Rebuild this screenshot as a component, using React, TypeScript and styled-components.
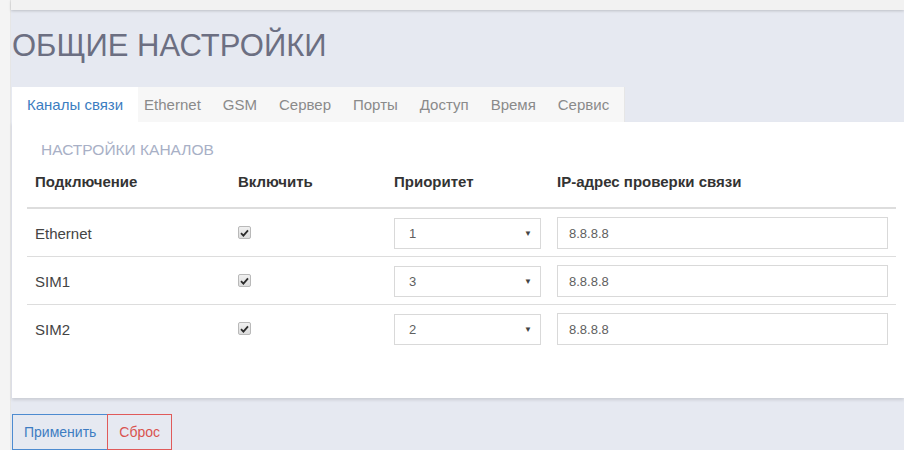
import React from 'react';
import styled, { createGlobalStyle } from 'styled-components';

const GlobalStyle = createGlobalStyle`
    html, body {
        margin: 0;
        padding: 0;
        background: #f4f4f4;
        font-family: "Liberation Sans", Arial, sans-serif;
        overflow: hidden;
    }
`;

const Page = styled.div`
    display: flex;
    width: 904px;
    height: 450px;
    overflow: hidden;
`;

const Gutter = styled.div`
    width: 10px;
    flex-shrink: 0;
    background: #f4f4f4;
    border-right: 1px solid #e6e6e6;
`;

const Main = styled.div`
    flex: 1;
    display: flex;
    flex-direction: column;
    min-width: 0;
`;

const TopBar = styled.div`
    height: 10px;
    flex-shrink: 0;
    background: #f2f2f2;
    box-shadow: 0 1px 3px rgba(0, 0, 0, 0.18);
    position: relative;
    z-index: 2;
`;

const Panel = styled.div`
    flex: 1;
    background: #e6e9f1;
    padding-left: 1px;
`;

const Title = styled.h1`
    margin: 19px 0 24px;
    font-size: 31px;
    line-height: 34px;
    font-weight: 400;
    color: #6c6f82;
`;

const Tabs = styled.div`
    display: flex;
    height: 35px;
`;

const Tab = styled.div<{ $active?: boolean }>`
    position: relative;
    z-index: ${(p) => (p.$active ? 1 : 0)};
    display: flex;
    align-items: center;
    padding: 0 15px;
    margin-left: -9px;
    font-size: 15px;
    color: ${(p) => (p.$active ? '#3b7dc1' : '#8a8a8a')};
    background: ${(p) => (p.$active ? '#ffffff' : '#f7f7f7')};
    border-right: ${(p) => (p.$active ? 'none' : '1px solid #e6e6e6')};
    &:first-child {
        margin-left: 0;
    }
`;

const Card = styled.div`
    background: #ffffff;
    padding: 17px 8px 46px 15px;
    box-shadow: 0 2px 3px rgba(0, 0, 0, 0.12);
`;

const SectionTitle = styled.div`
    font-size: 15.5px;
    line-height: 21px;
    color: #a8b0c6;
    padding-left: 14px;
    margin-bottom: 3px;
`;

const Table = styled.table`
    width: 869px;
    table-layout: fixed;
    border-collapse: collapse;
    font-size: 15px;
    color: #333;
`;

const Th = styled.th<{ $w: number }>`
    box-sizing: border-box;
    width: ${(p) => p.$w}px;
    text-align: left;
    font-weight: 700;
    padding: 8px 8px 15px;
    line-height: 21px;
    border-bottom: 2px solid #dddddd;
`;

const Row = styled.tr`
    & + & td {
        border-top: 1px solid #dddddd;
    }
`;

const Td = styled.td`
    padding: 8px 8px 7px;
    line-height: 21px;
    vertical-align: middle;
    color: #444;
`;

const Check = styled.span`
    display: inline-flex;
    align-items: center;
    justify-content: center;
    width: 11px;
    height: 11px;
    border: 1px solid #b9b9b9;
    border-radius: 2px;
    background: linear-gradient(#f0f0f0, #dcdcdc);
    vertical-align: middle;
    position: relative;
    top: -2px;
`;

const SelectBox = styled.div`
    display: flex;
    align-items: center;
    justify-content: space-between;
    height: 31px;
    box-sizing: border-box;
    border: 1px solid #d9d9d9;
    padding: 0 8px 0 14px;
    font-size: 13px;
    color: #606060;
    background: #fff;
`;

const Arrow = styled.span`
    font-size: 8px;
    color: #444;
`;

const TextBox = styled.div`
    display: flex;
    align-items: center;
    height: 32px;
    box-sizing: border-box;
    border: 1px solid #d9d9d9;
    padding: 0 11px;
    font-size: 13px;
    color: #606060;
    background: #fff;
`;

const Actions = styled.div`
    display: flex;
    margin-top: 16px;
`;

const Button = styled.button<{ $tone: 'blue' | 'red' }>`
    font-family: inherit;
    font-size: 14px;
    line-height: 20px;
    padding: 7px 11px;
    background: transparent;
    border: 1px solid ${(p) => (p.$tone === 'blue' ? '#4d8bd0' : '#e05a5a')};
    color: ${(p) => (p.$tone === 'blue' ? '#3d7cc2' : '#d9534f')};
    cursor: pointer;
    & + & {
        margin-left: -1px;
    }
`;

const tabs = ['Каналы связи', 'Ethernet', 'GSM', 'Сервер', 'Порты', 'Доступ', 'Время', 'Сервис'];

const channels = [
    { name: 'Ethernet', priority: '1', ip: '8.8.8.8' },
    { name: 'SIM1', priority: '3', ip: '8.8.8.8' },
    { name: 'SIM2', priority: '2', ip: '8.8.8.8' },
];

const CheckMark = () => (
    <Check>
        <svg width="9" height="8" viewBox="0 0 9 8">
            <path d="M1 4.2 L3.4 6.6 L8 1.4" fill="none" stroke="#2b2b2b" strokeWidth="1.8" />
        </svg>
    </Check>
);

const App: React.FC = () => {
    return (
        <Page>
            <GlobalStyle />
            <Gutter />
            <Main>
                <TopBar />
                <Panel>
                    <Title>ОБЩИЕ НАСТРОЙКИ</Title>
                    <Tabs>
                        {tabs.map((t, i) => (
                            <Tab key={t} $active={i === 0}>{t}</Tab>
                        ))}
                    </Tabs>
                    <Card>
                        <SectionTitle>НАСТРОЙКИ КАНАЛОВ</SectionTitle>
                        <Table>
                            <thead>
                                <tr>
                                    <Th $w={203}>Подключение</Th>
                                    <Th $w={156}>Включить</Th>
                                    <Th $w={163}>Приоритет</Th>
                                    <Th $w={347}>IP-адрес проверки связи</Th>
                                </tr>
                            </thead>
                            <tbody>
                                {channels.map((c) => (
                                    <Row key={c.name}>
                                        <Td>{c.name}</Td>
                                        <Td><CheckMark /></Td>
                                        <Td>
                                            <SelectBox>
                                                {c.priority}
                                                <Arrow>▼</Arrow>
                                            </SelectBox>
                                        </Td>
                                        <Td>
                                            <TextBox>{c.ip}</TextBox>
                                        </Td>
                                    </Row>
                                ))}
                            </tbody>
                        </Table>
                    </Card>
                    <Actions>
                        <Button $tone="blue">Применить</Button>
                        <Button $tone="red">Сброс</Button>
                    </Actions>
                </Panel>
            </Main>
        </Page>
    );
};

export default App;
